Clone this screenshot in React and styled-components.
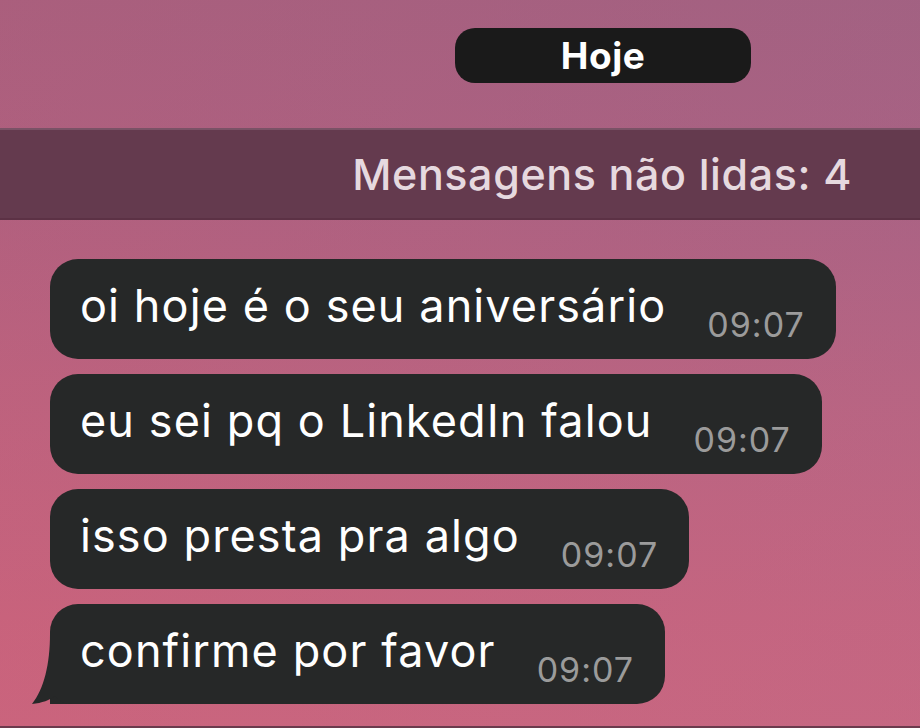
import React from "react";
import styled, { createGlobalStyle } from "styled-components";

const GlobalStyle = createGlobalStyle`
  html, body {
    margin: 0;
    padding: 0;
  }
  body {
    font-family: Inter, "Noto Sans", "Liberation Sans", sans-serif;
    -webkit-font-smoothing: antialiased;
  }
`;

const messages = [
  { text: "oi hoje é o seu aniversário", time: "09:07" },
  { text: "eu sei pq o LinkedIn falou", time: "09:07" },
  { text: "isso presta pra algo", time: "09:07" },
  { text: "confirme por favor", time: "09:07", tail: true },
];

const Screen = styled.div`
  width: 920px;
  height: 728px;
  overflow: hidden;
  display: flex;
  flex-direction: column;
  box-sizing: border-box;
  border-bottom: 2px solid #6b3b4d;
  background:
    linear-gradient(90deg, rgba(185, 88, 118, 0.25) 0%, rgba(150, 100, 145, 0.18) 100%),
    linear-gradient(180deg, #a5617f 0%, #ad6281 25%, #bf6580 55%, #cd667e 85%, #d0687f 100%);
`;

const DateRow = styled.div`
  display: flex;
  padding: 28px 0 0 455px;
`;

const DatePill = styled.div`
  width: 296px;
  height: 55px;
  border-radius: 20px;
  background: #1a1a1a;
  color: #ffffff;
  display: flex;
  align-items: center;
  justify-content: center;
  font-size: 37px;
  font-weight: 700;
  letter-spacing: 0.5px;
`;

const UnreadBar = styled.div`
  margin-top: 45px;
  height: 92px;
  box-sizing: border-box;
  background: #643a4e;
  border-top: 2px solid #7a5266;
  border-bottom: 2px solid #5c3145;
  display: flex;
  align-items: center;
  justify-content: flex-end;
  padding-right: 68px;
  color: #e6d9df;
  font-size: 43px;
  font-weight: 500;
  letter-spacing: 0.6px;
`;

const List = styled.div`
  display: flex;
  flex-direction: column;
  align-items: flex-start;
  gap: 15px;
  padding: 39px 0 0 50px;
`;

const Bubble = styled.div`
  position: relative;
  height: 100px;
  box-sizing: border-box;
  display: flex;
  align-items: flex-start;
  padding: 26px 31px 0 30px;
  border-radius: 28px;
  border-bottom-left-radius: ${(p) => (p.$tail ? "0" : "28px")};
  background: #262828;
`;

const Text = styled.span`
  color: #ffffff;
  font-size: 45px;
  line-height: 42px;
  letter-spacing: 1.1px;
  white-space: nowrap;
`;

const Time = styled.span`
  margin: 25px 0 0 41px;
  color: #9b9b9b;
  font-size: 34px;
  line-height: 30px;
  letter-spacing: 1px;
  white-space: nowrap;
`;

const Tail = styled.svg`
  position: absolute;
  left: -20px;
  bottom: 0;
  width: 50px;
  height: 70px;
`;

export default function App() {
  return (
    <>
      <GlobalStyle />
      <Screen>
        <DateRow>
          <DatePill>Hoje</DatePill>
        </DateRow>
        <UnreadBar>Mensagens não lidas: 4</UnreadBar>
        <List>
          {messages.map((m, i) => (
            <Bubble key={i} $tail={m.tail}>
              {m.tail && (
                <Tail viewBox="0 0 50 70">
                  <path
                    d="M20 0 C20 30 14 55 2 70 C12 69 20 66 25 62 C28 66 33 70 42 70 L50 70 L50 0 Z"
                    fill="#262828"
                  />
                </Tail>
              )}
              <Text>{m.text}</Text>
              <Time>{m.time}</Time>
            </Bubble>
          ))}
        </List>
      </Screen>
    </>
  );
}
